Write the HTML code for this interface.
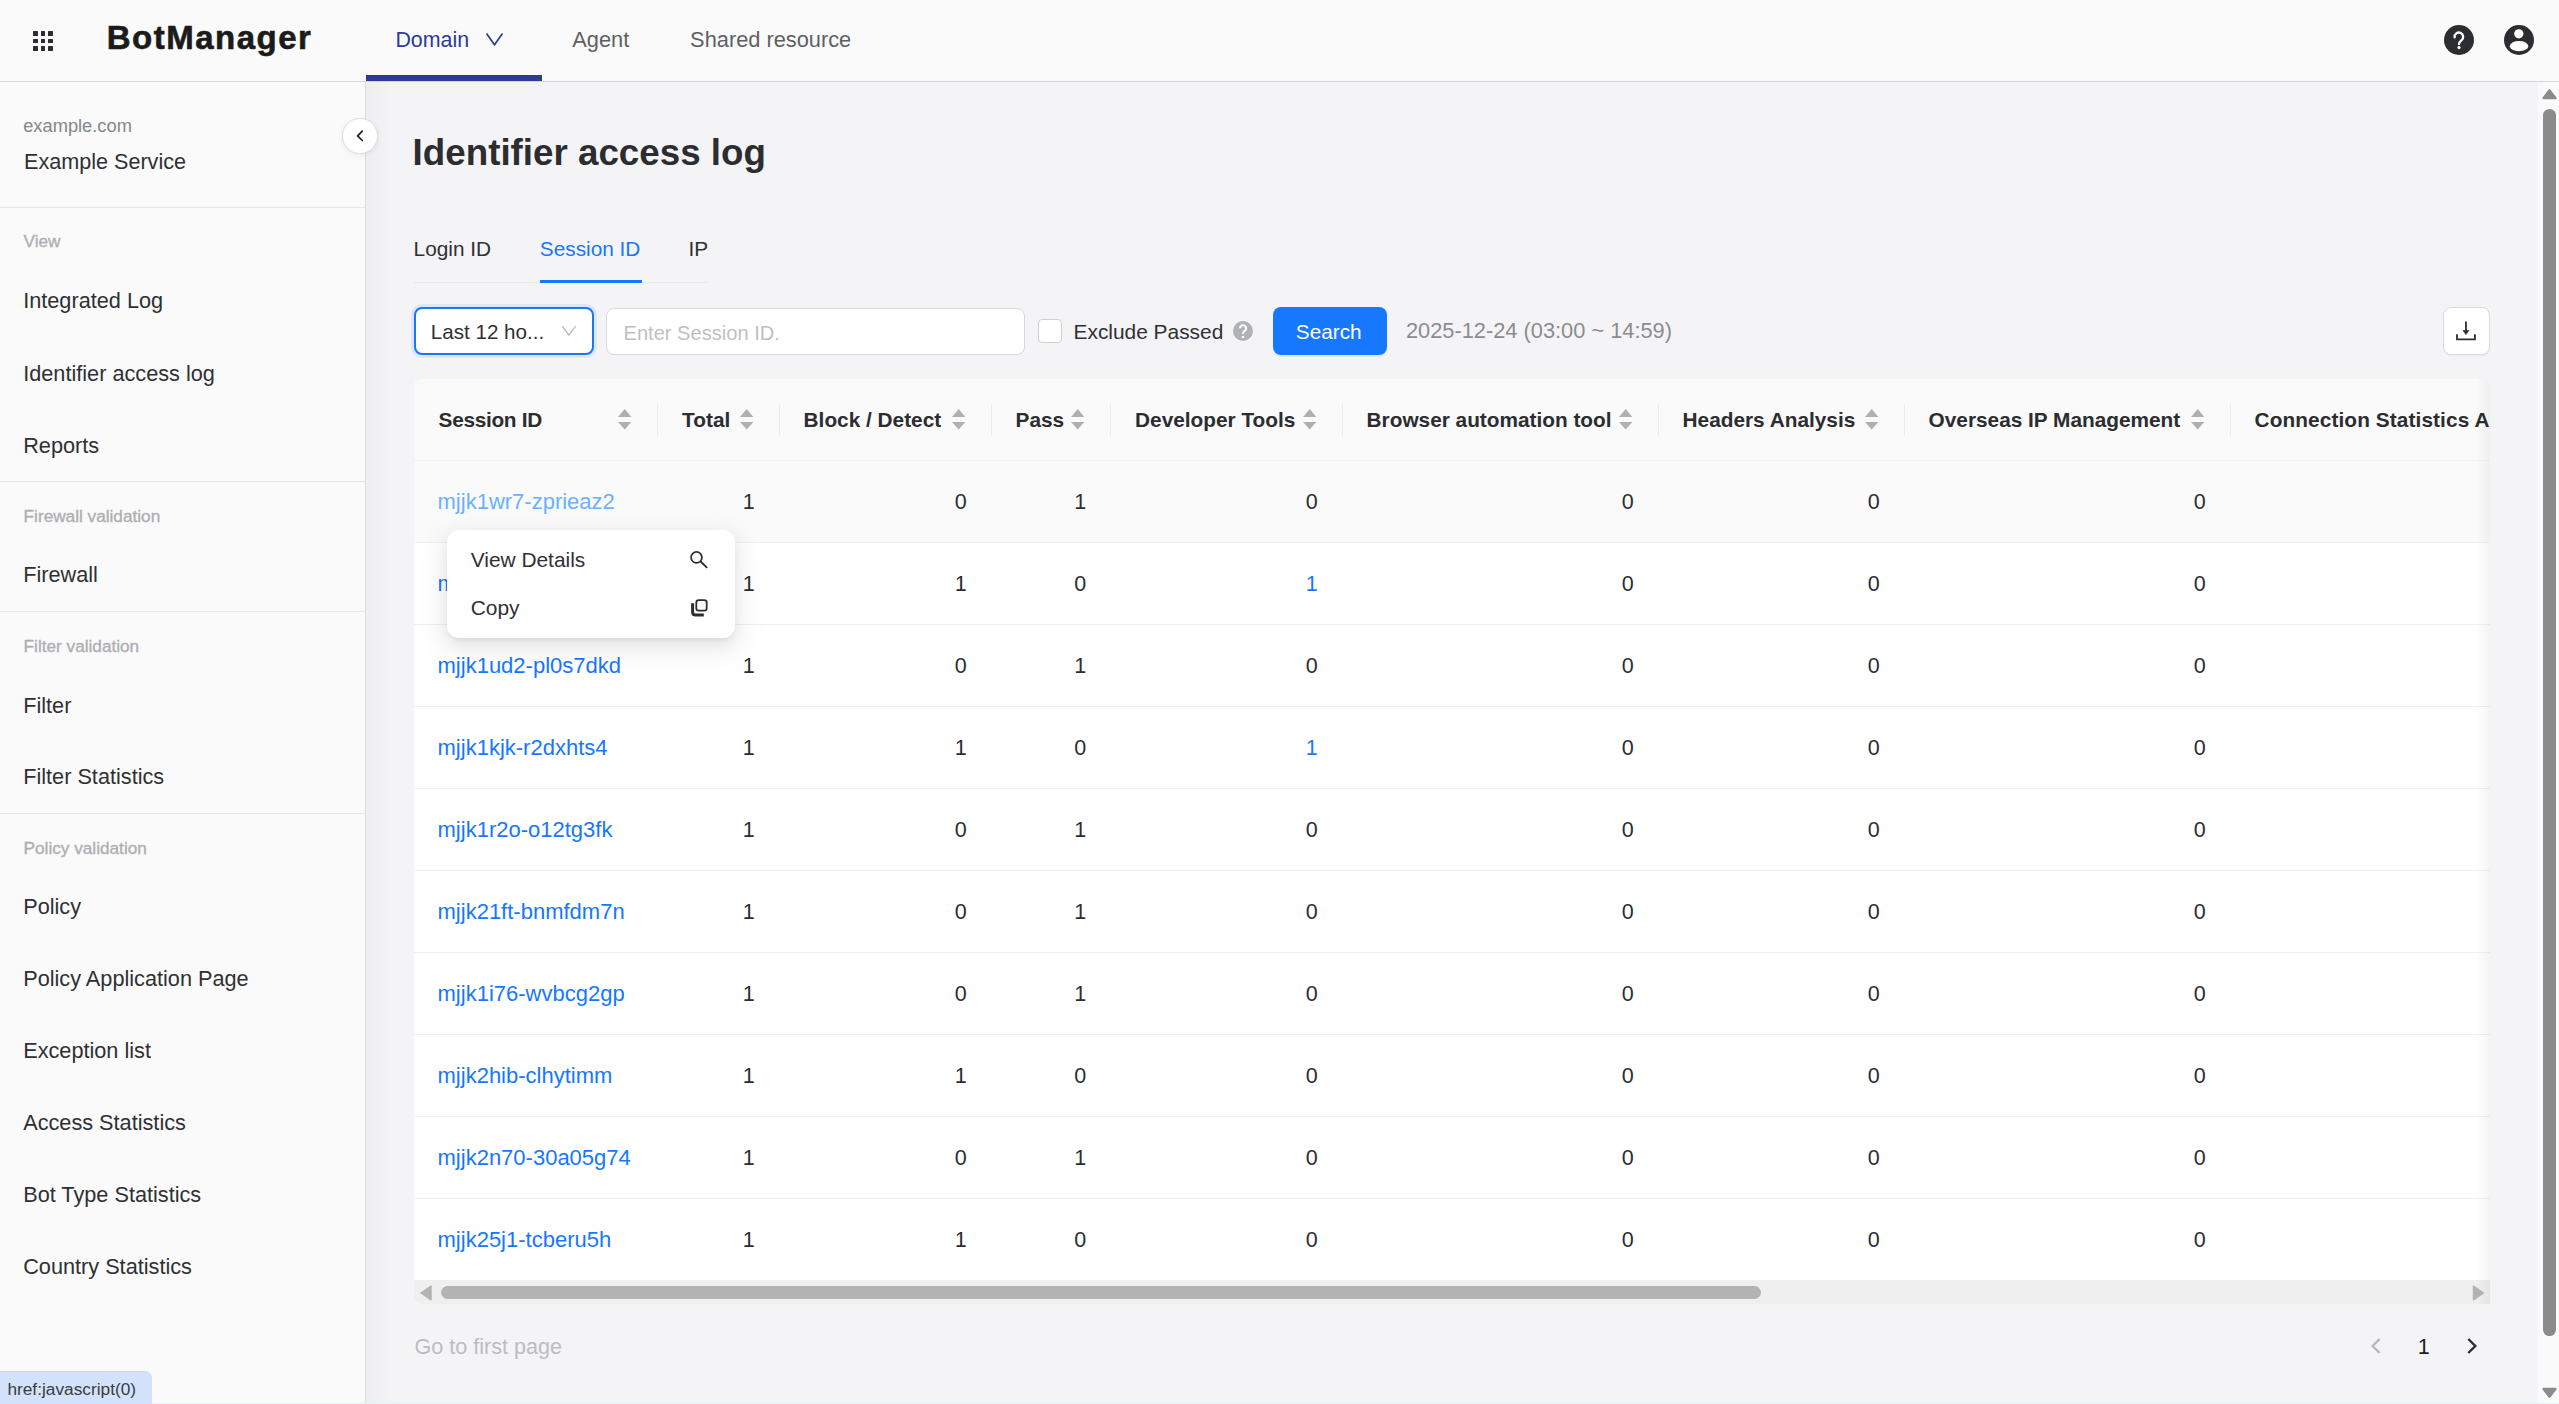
<!DOCTYPE html>
<html><head><meta charset="utf-8"><title>BotManager - Identifier access log</title>
<style>
html,body{margin:0;padding:0;}
body{width:2559px;height:1404px;overflow:hidden;position:relative;font-family:"Liberation Sans",sans-serif;background:#f4f4f6;}
.b{position:absolute;}
.t{position:absolute;white-space:nowrap;line-height:1;}
</style></head><body>
<div class="b" style="left:0px;top:0px;width:2559px;height:1404px;background:#f4f4f6;"></div>
<div class="b" style="left:0px;top:0px;width:2559px;height:81px;background:#fafafa;"></div>
<div class="b" style="left:0px;top:81px;width:2559px;height:1px;background:#d6d6da;"></div>
<div class="b" style="left:0px;top:82px;width:365px;height:1322px;background:#fafafa;"></div>
<div class="b" style="left:365px;top:82px;width:1px;height:1322px;background:#dcdce0;"></div>
<div class="b" style="left:2538px;top:82px;width:21px;height:1322px;background:#fafafa;"></div>
<div class="b" style="left:366px;top:82px;width:30px;height:1322px;background:linear-gradient(to right, rgba(0,0,0,0.025), rgba(0,0,0,0));"></div>
<div class="b" style="left:33.0px;top:31.1px;width:4.5px;height:4.5px;background:#2b2d31;border-radius:0.5px;"></div>
<div class="b" style="left:33.0px;top:38.7px;width:4.5px;height:4.5px;background:#2b2d31;border-radius:0.5px;"></div>
<div class="b" style="left:33.0px;top:46.3px;width:4.5px;height:4.5px;background:#2b2d31;border-radius:0.5px;"></div>
<div class="b" style="left:40.6px;top:31.1px;width:4.5px;height:4.5px;background:#2b2d31;border-radius:0.5px;"></div>
<div class="b" style="left:40.6px;top:38.7px;width:4.5px;height:4.5px;background:#2b2d31;border-radius:0.5px;"></div>
<div class="b" style="left:40.6px;top:46.3px;width:4.5px;height:4.5px;background:#2b2d31;border-radius:0.5px;"></div>
<div class="b" style="left:48.2px;top:31.1px;width:4.5px;height:4.5px;background:#2b2d31;border-radius:0.5px;"></div>
<div class="b" style="left:48.2px;top:38.7px;width:4.5px;height:4.5px;background:#2b2d31;border-radius:0.5px;"></div>
<div class="b" style="left:48.2px;top:46.3px;width:4.5px;height:4.5px;background:#2b2d31;border-radius:0.5px;"></div>
<div class="t" style="left:106.70px;top:20.77px;font-size:33px;color:#1b1b1b;font-weight:700;letter-spacing:1.5px;-webkit-text-stroke:0.6px #1b1b1b;">BotManager</div>
<div class="t" style="left:395.40px;top:29.78px;font-size:21.4px;color:#2c3a98;">Domain</div>
<svg class="b" style="left:484px;top:31px;" width="22" height="16" viewBox="0 0 22 16"><path d="M2.5 2.5 L10.5 13.8 L18.5 2.5" fill="none" stroke="#2c3a98" stroke-width="1.7"/></svg>
<div class="b" style="left:366px;top:75px;width:176px;height:6px;background:#2c3a98;"></div>
<div class="t" style="left:572.30px;top:29.45px;font-size:21.8px;color:#5f5f63;">Agent</div>
<div class="t" style="left:690.10px;top:29.45px;font-size:21.8px;color:#5f5f63;">Shared resource</div>
<svg class="b" style="left:2444px;top:25px;" width="30" height="30" viewBox="0 0 30 30"><circle cx="15" cy="15" r="15" fill="#2b2d31"/><path d="M10.6 12.3 A4.3 4.3 0 1 1 17.6 15.2 C16 16.5 15 17 15 19.3" fill="none" stroke="#fff" stroke-width="2.3" stroke-linecap="round"/><circle cx="15" cy="22.6" r="1.55" fill="#fff"/></svg>
<svg class="b" style="left:2504px;top:25px;" width="30" height="30" viewBox="0 0 30 30"><circle cx="15" cy="15" r="15" fill="#2b2d31"/><circle cx="14.8" cy="8.8" r="4.65" fill="#fff"/><ellipse cx="15" cy="21.2" rx="9.25" ry="5.1" fill="#fff"/></svg>
<div class="t" style="left:23.20px;top:117.21px;font-size:18.3px;color:#85868a;">example.com</div>
<div class="t" style="left:24.00px;top:150.62px;font-size:21.6px;color:#2f3034;">Example Service</div>
<div class="b" style="left:0px;top:207px;width:365px;height:1px;background:#e6e6e9;"></div>
<div class="t" style="left:23.60px;top:233.34px;font-size:17.2px;color:#aeafb3;-webkit-text-stroke:0.35px #aeafb3;">View</div>
<div class="t" style="left:23.20px;top:290.43px;font-size:21.7px;color:#2f3034;">Integrated Log</div>
<div class="t" style="left:23.20px;top:362.93px;font-size:21.7px;color:#2f3034;">Identifier access log</div>
<div class="t" style="left:23.20px;top:434.93px;font-size:21.7px;color:#2f3034;">Reports</div>
<div class="b" style="left:0px;top:481px;width:365px;height:1px;background:#e6e6e9;"></div>
<div class="t" style="left:23.60px;top:508.24px;font-size:17.2px;color:#aeafb3;-webkit-text-stroke:0.35px #aeafb3;">Firewall validation</div>
<div class="t" style="left:23.20px;top:564.43px;font-size:21.7px;color:#2f3034;">Firewall</div>
<div class="b" style="left:0px;top:611px;width:365px;height:1px;background:#e6e6e9;"></div>
<div class="t" style="left:23.60px;top:638.34px;font-size:17.2px;color:#aeafb3;-webkit-text-stroke:0.35px #aeafb3;">Filter validation</div>
<div class="t" style="left:23.20px;top:694.93px;font-size:21.7px;color:#2f3034;">Filter</div>
<div class="t" style="left:23.20px;top:766.43px;font-size:21.7px;color:#2f3034;">Filter Statistics</div>
<div class="b" style="left:0px;top:813px;width:365px;height:1px;background:#e6e6e9;"></div>
<div class="t" style="left:23.60px;top:839.84px;font-size:17.2px;color:#aeafb3;-webkit-text-stroke:0.35px #aeafb3;">Policy validation</div>
<div class="t" style="left:23.20px;top:896.13px;font-size:21.7px;color:#2f3034;">Policy</div>
<div class="t" style="left:23.20px;top:968.13px;font-size:21.7px;color:#2f3034;">Policy Application Page</div>
<div class="t" style="left:23.20px;top:1040.23px;font-size:21.7px;color:#2f3034;">Exception list</div>
<div class="t" style="left:23.20px;top:1112.43px;font-size:21.7px;color:#2f3034;">Access Statistics</div>
<div class="t" style="left:23.20px;top:1184.33px;font-size:21.7px;color:#2f3034;">Bot Type Statistics</div>
<div class="t" style="left:23.20px;top:1256.13px;font-size:21.7px;color:#2f3034;">Country Statistics</div>
<div class="b" style="left:342.2px;top:118.2px;width:35.5px;height:35.5px;background:#fff;border:1px solid #dcdcdf;border-radius:50%;box-sizing:border-box;box-shadow:0 2px 6px rgba(0,0,0,0.06);"></div>
<svg class="b" style="left:350px;top:126px;" width="20" height="20" viewBox="0 0 20 20"><path d="M12.3 5.2 L7.6 9.85 L12.3 14.5" fill="none" stroke="#1f2023" stroke-width="1.75" stroke-linecap="round" stroke-linejoin="round"/></svg>
<div class="t" style="left:412.60px;top:134.69px;font-size:36.75px;color:#2b2d31;font-weight:700;">Identifier access log</div>
<div class="t" style="left:413.60px;top:239.19px;font-size:20.8px;color:#2f3034;">Login ID</div>
<div class="t" style="left:539.80px;top:239.19px;font-size:20.8px;color:#1677ff;">Session ID</div>
<div class="t" style="left:688.60px;top:239.19px;font-size:20.8px;color:#2f3034;">IP</div>
<div class="b" style="left:414px;top:282px;width:294px;height:1px;background:#e9e9ec;"></div>
<div class="b" style="left:540.3px;top:280px;width:101.4px;height:3px;background:#1677ff;"></div>
<div class="b" style="left:411px;top:304px;width:186px;height:54px;border-radius:11px;background:rgba(22,119,255,0.10);"></div>
<div class="b" style="left:414px;top:307px;width:180px;height:48px;background:#fff;border:2px solid #1677ff;border-radius:8px;box-sizing:border-box;"></div>
<div class="t" style="left:430.80px;top:322.36px;font-size:20.6px;color:#2f3034;">Last 12 ho...</div>
<svg class="b" style="left:560px;top:324px;" width="18" height="14" viewBox="0 0 18 14"><path d="M2.2 2.1 L8.9 11 L15.6 2.1" fill="none" stroke="#bdbdbd" stroke-width="1.4"/></svg>
<div class="b" style="left:606px;top:308px;width:419px;height:47px;background:#fff;border:1px solid #d9d9d9;border-radius:8px;box-sizing:border-box;"></div>
<div class="t" style="left:623.50px;top:322.79px;font-size:20.1px;color:#bfbfbf;">Enter Session ID.</div>
<div class="b" style="left:1038px;top:319px;width:23.5px;height:23.5px;background:#fff;border:1px solid #d0d0d4;border-radius:4px;box-sizing:border-box;"></div>
<div class="t" style="left:1073.50px;top:322.11px;font-size:20.9px;color:#2f3034;">Exclude Passed</div>
<svg class="b" style="left:1233px;top:321px;" width="20" height="20" viewBox="0 0 20 20"><circle cx="10" cy="10" r="10" fill="#b1b2b6"/><path d="M7.1 7.4 A3 3 0 1 1 11.6 9.8 C10.6 10.6 10 11.2 10 13" fill="none" stroke="#fff" stroke-width="2"/><rect x="8.9" y="15" width="2.3" height="2.1" fill="#fff"/></svg>
<div class="b" style="left:1273px;top:307px;width:114px;height:48px;background:#1677ff;border-radius:8px;box-shadow:0 2px 0 rgba(5,145,255,0.1);"></div>
<div class="t" style="left:1295.80px;top:322.19px;font-size:20.8px;color:#ffffff;">Search</div>
<div class="t" style="left:1406.00px;top:319.55px;font-size:21.8px;color:#8c8c8f;">2025-12-24 (03:00 ~ 14:59)</div>
<div class="b" style="left:2443px;top:307px;width:47px;height:48px;background:#fff;border:1px solid #d9d9d9;border-radius:8px;box-sizing:border-box;box-shadow:0 2px 0 rgba(0,0,0,0.02);"></div>
<svg class="b" style="left:2446px;top:311px;" width="40" height="40" viewBox="0 0 40 40"><path d="M19.95 10.5 V21" stroke="#2b2d31" stroke-width="1.8" fill="none"/><path d="M16.9 19.5 L23 19.5 L19.95 23.6 Z" fill="#2b2d31" stroke="#2b2d31" stroke-width="0.6" stroke-linejoin="round"/><path d="M11 23.2 V28.3 H28.9 V23.2" stroke="#2b2d31" stroke-width="1.8" fill="none"/></svg>
<div class="b" style="left:414px;top:379px;width:2076px;height:925px;border-radius:8px 8px 0 8px;overflow:hidden;background:#fff;">
<div class="b" style="left:0px;top:0px;width:2076px;height:81px;background:#fafafa;"></div>
<div class="b" style="left:0px;top:81px;width:2076px;height:1px;background:#f0f0f0;"></div>
<div class="t" style="left:24.60px;top:31.19px;font-size:20.8px;color:#2b2d31;font-weight:700;letter-spacing:-0.3px;">Session ID</div>
<div class="b" style="left:243px;top:25px;width:1px;height:32px;background:#ececec;"></div>
<svg class="b" style="left:204.30000000000007px;top:29px;" width="14" height="23" viewBox="0 0 14 23"><path d="M6.7 1 L13.4 8.9 L0 8.9 Z" fill="#b0b0b0"/><path d="M0 13.9 L13.4 13.9 L6.7 21.6 Z" fill="#b0b0b0"/></svg>
<div class="t" style="left:268.10px;top:31.19px;font-size:20.8px;color:#2b2d31;font-weight:700;">Total</div>
<div class="b" style="left:365px;top:25px;width:1px;height:32px;background:#ececec;"></div>
<svg class="b" style="left:325.80000000000007px;top:29px;" width="14" height="23" viewBox="0 0 14 23"><path d="M6.7 1 L13.4 8.9 L0 8.9 Z" fill="#b0b0b0"/><path d="M0 13.9 L13.4 13.9 L6.7 21.6 Z" fill="#b0b0b0"/></svg>
<div class="t" style="left:389.60px;top:31.19px;font-size:20.8px;color:#2b2d31;font-weight:700;">Block / Detect</div>
<div class="b" style="left:577px;top:25px;width:1px;height:32px;background:#ececec;"></div>
<svg class="b" style="left:537.8000000000001px;top:29px;" width="14" height="23" viewBox="0 0 14 23"><path d="M6.7 1 L13.4 8.9 L0 8.9 Z" fill="#b0b0b0"/><path d="M0 13.9 L13.4 13.9 L6.7 21.6 Z" fill="#b0b0b0"/></svg>
<div class="t" style="left:601.60px;top:31.19px;font-size:20.8px;color:#2b2d31;font-weight:700;">Pass</div>
<div class="b" style="left:696px;top:25px;width:1px;height:32px;background:#ececec;"></div>
<svg class="b" style="left:657.3px;top:29px;" width="14" height="23" viewBox="0 0 14 23"><path d="M6.7 1 L13.4 8.9 L0 8.9 Z" fill="#b0b0b0"/><path d="M0 13.9 L13.4 13.9 L6.7 21.6 Z" fill="#b0b0b0"/></svg>
<div class="t" style="left:721.10px;top:31.19px;font-size:20.8px;color:#2b2d31;font-weight:700;">Developer Tools</div>
<div class="b" style="left:928px;top:25px;width:1px;height:32px;background:#ececec;"></div>
<svg class="b" style="left:888.8px;top:29px;" width="14" height="23" viewBox="0 0 14 23"><path d="M6.7 1 L13.4 8.9 L0 8.9 Z" fill="#b0b0b0"/><path d="M0 13.9 L13.4 13.9 L6.7 21.6 Z" fill="#b0b0b0"/></svg>
<div class="t" style="left:952.60px;top:31.19px;font-size:20.8px;color:#2b2d31;font-weight:700;">Browser automation tool</div>
<div class="b" style="left:1244px;top:25px;width:1px;height:32px;background:#ececec;"></div>
<svg class="b" style="left:1204.8px;top:29px;" width="14" height="23" viewBox="0 0 14 23"><path d="M6.7 1 L13.4 8.9 L0 8.9 Z" fill="#b0b0b0"/><path d="M0 13.9 L13.4 13.9 L6.7 21.6 Z" fill="#b0b0b0"/></svg>
<div class="t" style="left:1268.60px;top:31.19px;font-size:20.8px;color:#2b2d31;font-weight:700;">Headers Analysis</div>
<div class="b" style="left:1490px;top:25px;width:1px;height:32px;background:#ececec;"></div>
<svg class="b" style="left:1450.8px;top:29px;" width="14" height="23" viewBox="0 0 14 23"><path d="M6.7 1 L13.4 8.9 L0 8.9 Z" fill="#b0b0b0"/><path d="M0 13.9 L13.4 13.9 L6.7 21.6 Z" fill="#b0b0b0"/></svg>
<div class="t" style="left:1514.60px;top:31.19px;font-size:20.8px;color:#2b2d31;font-weight:700;">Overseas IP Management</div>
<div class="b" style="left:1816px;top:25px;width:1px;height:32px;background:#ececec;"></div>
<svg class="b" style="left:1776.7999999999997px;top:29px;" width="14" height="23" viewBox="0 0 14 23"><path d="M6.7 1 L13.4 8.9 L0 8.9 Z" fill="#b0b0b0"/><path d="M0 13.9 L13.4 13.9 L6.7 21.6 Z" fill="#b0b0b0"/></svg>
<div class="t" style="left:1840.60px;top:31.19px;font-size:20.8px;color:#2b2d31;font-weight:700;letter-spacing:0.1px;">Connection Statistics Analysis</div>
<div class="b" style="left:0px;top:82px;width:2076px;height:81px;background:#fafafa;"></div>
<div class="b" style="left:0px;top:163px;width:2076px;height:1px;background:#f0f0f0;"></div>
<div class="t" style="left:23.55px;top:112.08px;font-size:22px;color:#69b1ff;">mjjk1wr7-zprieaz2</div>
<div class="t" style="right:1735.20px;top:112.80px;font-size:21.5px;color:#2b2d31;">1</div>
<div class="t" style="right:1523.20px;top:112.80px;font-size:21.5px;color:#2b2d31;">0</div>
<div class="t" style="right:1403.70px;top:112.80px;font-size:21.5px;color:#2b2d31;">1</div>
<div class="t" style="right:1172.20px;top:112.80px;font-size:21.5px;color:#2b2d31;">0</div>
<div class="t" style="right:856.20px;top:112.80px;font-size:21.5px;color:#2b2d31;">0</div>
<div class="t" style="right:610.20px;top:112.80px;font-size:21.5px;color:#2b2d31;">0</div>
<div class="t" style="right:284.20px;top:112.80px;font-size:21.5px;color:#2b2d31;">0</div>
<div class="b" style="left:0px;top:245px;width:2076px;height:1px;background:#f0f0f0;"></div>
<div class="t" style="left:23.55px;top:194.08px;font-size:22px;color:#1677ff;">mjjk1x4e-hg7vcnd2</div>
<div class="t" style="right:1735.20px;top:194.80px;font-size:21.5px;color:#2b2d31;">1</div>
<div class="t" style="right:1523.20px;top:194.80px;font-size:21.5px;color:#2b2d31;">1</div>
<div class="t" style="right:1403.70px;top:194.80px;font-size:21.5px;color:#2b2d31;">0</div>
<div class="t" style="right:1172.20px;top:194.80px;font-size:21.5px;color:#1677ff;">1</div>
<div class="t" style="right:856.20px;top:194.80px;font-size:21.5px;color:#2b2d31;">0</div>
<div class="t" style="right:610.20px;top:194.80px;font-size:21.5px;color:#2b2d31;">0</div>
<div class="t" style="right:284.20px;top:194.80px;font-size:21.5px;color:#2b2d31;">0</div>
<div class="b" style="left:0px;top:327px;width:2076px;height:1px;background:#f0f0f0;"></div>
<div class="t" style="left:23.55px;top:276.08px;font-size:22px;color:#1677ff;">mjjk1ud2-pl0s7dkd</div>
<div class="t" style="right:1735.20px;top:276.80px;font-size:21.5px;color:#2b2d31;">1</div>
<div class="t" style="right:1523.20px;top:276.80px;font-size:21.5px;color:#2b2d31;">0</div>
<div class="t" style="right:1403.70px;top:276.80px;font-size:21.5px;color:#2b2d31;">1</div>
<div class="t" style="right:1172.20px;top:276.80px;font-size:21.5px;color:#2b2d31;">0</div>
<div class="t" style="right:856.20px;top:276.80px;font-size:21.5px;color:#2b2d31;">0</div>
<div class="t" style="right:610.20px;top:276.80px;font-size:21.5px;color:#2b2d31;">0</div>
<div class="t" style="right:284.20px;top:276.80px;font-size:21.5px;color:#2b2d31;">0</div>
<div class="b" style="left:0px;top:409px;width:2076px;height:1px;background:#f0f0f0;"></div>
<div class="t" style="left:23.55px;top:358.08px;font-size:22px;color:#1677ff;">mjjk1kjk-r2dxhts4</div>
<div class="t" style="right:1735.20px;top:358.80px;font-size:21.5px;color:#2b2d31;">1</div>
<div class="t" style="right:1523.20px;top:358.80px;font-size:21.5px;color:#2b2d31;">1</div>
<div class="t" style="right:1403.70px;top:358.80px;font-size:21.5px;color:#2b2d31;">0</div>
<div class="t" style="right:1172.20px;top:358.80px;font-size:21.5px;color:#1677ff;">1</div>
<div class="t" style="right:856.20px;top:358.80px;font-size:21.5px;color:#2b2d31;">0</div>
<div class="t" style="right:610.20px;top:358.80px;font-size:21.5px;color:#2b2d31;">0</div>
<div class="t" style="right:284.20px;top:358.80px;font-size:21.5px;color:#2b2d31;">0</div>
<div class="b" style="left:0px;top:491px;width:2076px;height:1px;background:#f0f0f0;"></div>
<div class="t" style="left:23.55px;top:440.08px;font-size:22px;color:#1677ff;">mjjk1r2o-o12tg3fk</div>
<div class="t" style="right:1735.20px;top:440.80px;font-size:21.5px;color:#2b2d31;">1</div>
<div class="t" style="right:1523.20px;top:440.80px;font-size:21.5px;color:#2b2d31;">0</div>
<div class="t" style="right:1403.70px;top:440.80px;font-size:21.5px;color:#2b2d31;">1</div>
<div class="t" style="right:1172.20px;top:440.80px;font-size:21.5px;color:#2b2d31;">0</div>
<div class="t" style="right:856.20px;top:440.80px;font-size:21.5px;color:#2b2d31;">0</div>
<div class="t" style="right:610.20px;top:440.80px;font-size:21.5px;color:#2b2d31;">0</div>
<div class="t" style="right:284.20px;top:440.80px;font-size:21.5px;color:#2b2d31;">0</div>
<div class="b" style="left:0px;top:573px;width:2076px;height:1px;background:#f0f0f0;"></div>
<div class="t" style="left:23.55px;top:522.08px;font-size:22px;color:#1677ff;">mjjk21ft-bnmfdm7n</div>
<div class="t" style="right:1735.20px;top:522.80px;font-size:21.5px;color:#2b2d31;">1</div>
<div class="t" style="right:1523.20px;top:522.80px;font-size:21.5px;color:#2b2d31;">0</div>
<div class="t" style="right:1403.70px;top:522.80px;font-size:21.5px;color:#2b2d31;">1</div>
<div class="t" style="right:1172.20px;top:522.80px;font-size:21.5px;color:#2b2d31;">0</div>
<div class="t" style="right:856.20px;top:522.80px;font-size:21.5px;color:#2b2d31;">0</div>
<div class="t" style="right:610.20px;top:522.80px;font-size:21.5px;color:#2b2d31;">0</div>
<div class="t" style="right:284.20px;top:522.80px;font-size:21.5px;color:#2b2d31;">0</div>
<div class="b" style="left:0px;top:655px;width:2076px;height:1px;background:#f0f0f0;"></div>
<div class="t" style="left:23.55px;top:604.08px;font-size:22px;color:#1677ff;">mjjk1i76-wvbcg2gp</div>
<div class="t" style="right:1735.20px;top:604.80px;font-size:21.5px;color:#2b2d31;">1</div>
<div class="t" style="right:1523.20px;top:604.80px;font-size:21.5px;color:#2b2d31;">0</div>
<div class="t" style="right:1403.70px;top:604.80px;font-size:21.5px;color:#2b2d31;">1</div>
<div class="t" style="right:1172.20px;top:604.80px;font-size:21.5px;color:#2b2d31;">0</div>
<div class="t" style="right:856.20px;top:604.80px;font-size:21.5px;color:#2b2d31;">0</div>
<div class="t" style="right:610.20px;top:604.80px;font-size:21.5px;color:#2b2d31;">0</div>
<div class="t" style="right:284.20px;top:604.80px;font-size:21.5px;color:#2b2d31;">0</div>
<div class="b" style="left:0px;top:737px;width:2076px;height:1px;background:#f0f0f0;"></div>
<div class="t" style="left:23.55px;top:686.08px;font-size:22px;color:#1677ff;">mjjk2hib-clhytimm</div>
<div class="t" style="right:1735.20px;top:686.80px;font-size:21.5px;color:#2b2d31;">1</div>
<div class="t" style="right:1523.20px;top:686.80px;font-size:21.5px;color:#2b2d31;">1</div>
<div class="t" style="right:1403.70px;top:686.80px;font-size:21.5px;color:#2b2d31;">0</div>
<div class="t" style="right:1172.20px;top:686.80px;font-size:21.5px;color:#2b2d31;">0</div>
<div class="t" style="right:856.20px;top:686.80px;font-size:21.5px;color:#2b2d31;">0</div>
<div class="t" style="right:610.20px;top:686.80px;font-size:21.5px;color:#2b2d31;">0</div>
<div class="t" style="right:284.20px;top:686.80px;font-size:21.5px;color:#2b2d31;">0</div>
<div class="b" style="left:0px;top:819px;width:2076px;height:1px;background:#f0f0f0;"></div>
<div class="t" style="left:23.55px;top:768.08px;font-size:22px;color:#1677ff;">mjjk2n70-30a05g74</div>
<div class="t" style="right:1735.20px;top:768.80px;font-size:21.5px;color:#2b2d31;">1</div>
<div class="t" style="right:1523.20px;top:768.80px;font-size:21.5px;color:#2b2d31;">0</div>
<div class="t" style="right:1403.70px;top:768.80px;font-size:21.5px;color:#2b2d31;">1</div>
<div class="t" style="right:1172.20px;top:768.80px;font-size:21.5px;color:#2b2d31;">0</div>
<div class="t" style="right:856.20px;top:768.80px;font-size:21.5px;color:#2b2d31;">0</div>
<div class="t" style="right:610.20px;top:768.80px;font-size:21.5px;color:#2b2d31;">0</div>
<div class="t" style="right:284.20px;top:768.80px;font-size:21.5px;color:#2b2d31;">0</div>
<div class="b" style="left:0px;top:901px;width:2076px;height:1px;background:#f0f0f0;"></div>
<div class="t" style="left:23.55px;top:850.08px;font-size:22px;color:#1677ff;">mjjk25j1-tcberu5h</div>
<div class="t" style="right:1735.20px;top:850.80px;font-size:21.5px;color:#2b2d31;">1</div>
<div class="t" style="right:1523.20px;top:850.80px;font-size:21.5px;color:#2b2d31;">1</div>
<div class="t" style="right:1403.70px;top:850.80px;font-size:21.5px;color:#2b2d31;">0</div>
<div class="t" style="right:1172.20px;top:850.80px;font-size:21.5px;color:#2b2d31;">0</div>
<div class="t" style="right:856.20px;top:850.80px;font-size:21.5px;color:#2b2d31;">0</div>
<div class="t" style="right:610.20px;top:850.80px;font-size:21.5px;color:#2b2d31;">0</div>
<div class="t" style="right:284.20px;top:850.80px;font-size:21.5px;color:#2b2d31;">0</div>
<div class="b" style="left:0px;top:901px;width:2076px;height:24px;background:#efefef;"></div>
<div class="b" style="left:27px;top:907px;width:1320px;height:13px;background:#b3b3b3;border-radius:6.5px;"></div>
<svg class="b" style="left:5px;top:906px;" width="14" height="16" viewBox="0 0 14 16"><path d="M12 1.2 L12 14.8 L2 8 Z" fill="#b3b3b3" stroke="#b3b3b3" stroke-width="1.5" stroke-linejoin="round"/></svg>
<svg class="b" style="left:2057px;top:906px;" width="14" height="16" viewBox="0 0 14 16"><path d="M2.5 1.2 L2.5 14.8 L12.5 8 Z" fill="#b3b3b3" stroke="#b3b3b3" stroke-width="1.5" stroke-linejoin="round"/></svg>
<div class="b" style="left:2062px;top:0px;width:14px;height:925px;background:linear-gradient(to right, rgba(0,0,0,0), rgba(0,0,0,0.045));"></div>
</div>
<div class="b" style="left:447px;top:530px;width:288px;height:108px;background:#fff;border-radius:12px;box-shadow:0 6px 16px 0 rgba(0,0,0,0.08),0 3px 6px -4px rgba(0,0,0,0.12),0 9px 28px 8px rgba(0,0,0,0.05);"></div>
<div class="t" style="left:470.70px;top:550.01px;font-size:20.9px;color:#2f3034;">View Details</div>
<div class="t" style="left:470.70px;top:598.11px;font-size:20.9px;color:#2f3034;">Copy</div>
<svg class="b" style="left:686px;top:547px;" width="26" height="26" viewBox="0 0 26 26"><circle cx="10.5" cy="10.4" r="5.45" fill="none" stroke="#2b2d31" stroke-width="1.7"/><path d="M14.6 14.5 L21.2 20.9" stroke="#2b2d31" stroke-width="1.8"/></svg>
<svg class="b" style="left:686px;top:595px;" width="26" height="26" viewBox="0 0 26 26"><rect x="10.3" y="5.1" width="10.4" height="10.5" rx="2.4" fill="none" stroke="#2b2d31" stroke-width="1.8"/><path d="M6.6 8.2 V16.9 Q6.6 19.9 9.6 19.9 H17.8" fill="none" stroke="#2b2d31" stroke-width="3"/></svg>
<div class="t" style="left:414.40px;top:1336.27px;font-size:21.6px;color:#bdbdc0;">Go to first page</div>
<svg class="b" style="left:2366px;top:1334px;" width="20" height="24" viewBox="0 0 20 24"><path d="M13.6 5 L6.6 12 L13.6 19" fill="none" stroke="#b5b5b5" stroke-width="2.2"/></svg>
<div class="t" style="left:2417.80px;top:1336.60px;font-size:21.5px;color:#1f1f1f;">1</div>
<svg class="b" style="left:2462px;top:1334px;" width="20" height="24" viewBox="0 0 20 24"><path d="M6.3 5 L13.3 12 L6.3 19" fill="none" stroke="#2b2d31" stroke-width="2.4"/></svg>
<svg class="b" style="left:2538px;top:86px;" width="21" height="16" viewBox="0 0 21 16"><path d="M11.5 4.2 L17.6 12.1 L5.4 12.1 Z" fill="#8b8b8b" stroke="#8b8b8b" stroke-width="2.2" stroke-linejoin="round"/></svg>
<div class="b" style="left:2543.2px;top:109px;width:12.8px;height:1227px;background:#8b8b8b;border-radius:6.4px;"></div>
<svg class="b" style="left:2538px;top:1385px;" width="21" height="16" viewBox="0 0 21 16"><path d="M5.4 3.9 L17.6 3.9 L11.5 11.8 Z" fill="#8b8b8b" stroke="#8b8b8b" stroke-width="2.2" stroke-linejoin="round"/></svg>
<div class="b" style="left:0px;top:1371.5px;width:152px;height:33px;background:#d3e3fd;border-top-right-radius:8px;box-shadow:0 -1px 0 #cfd3d8;"></div>
<div class="t" style="left:7.40px;top:1380.96px;font-size:17.3px;color:#3a3c40;">href:javascript(0)</div>
<div class="b" style="left:152px;top:1403px;width:2407px;height:1px;background:#eaf1f9;"></div>
</body></html>
